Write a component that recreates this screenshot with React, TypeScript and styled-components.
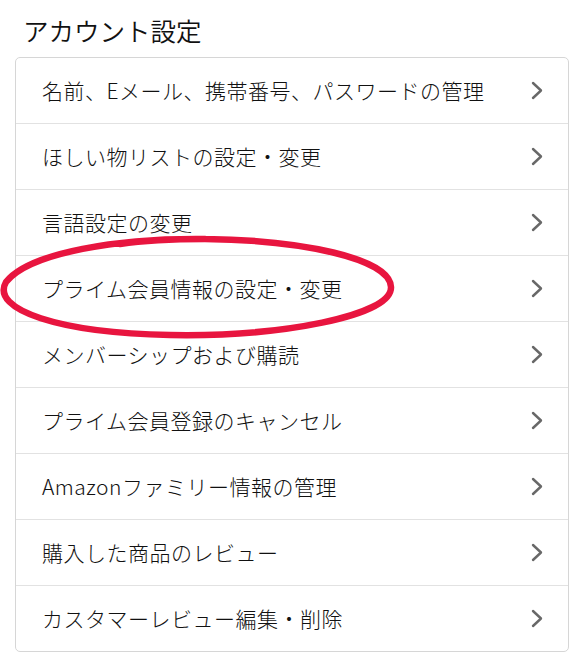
import React from "react";
import styled, { createGlobalStyle } from "styled-components";

const GlobalStyle = createGlobalStyle`
  html, body {
    margin: 0;
    padding: 0;
    background: #ffffff;
  }
  body {
    font-family: "Noto Sans CJK JP", "Noto Sans", sans-serif;
    color: #111111;
  }
`;

const Page = styled.main`
  position: relative;
  width: 582px;
  height: 664px;
  box-sizing: border-box;
  padding: 12px 13px 0 15px;
`;

const Title = styled.h2`
  margin: 0 0 9px 8px;
  height: 36px;
  line-height: 36px;
  font-size: 25.5px;
  font-weight: 350;
  color: #111111;
`;

const Card = styled.ul`
  list-style: none;
  margin: 0;
  padding: 0;
  border: 1px solid #d6d6d6;
  border-radius: 5px;
  background: #ffffff;
`;

const Row = styled.li<{ $first?: boolean }>`
  display: flex;
  align-items: center;
  justify-content: space-between;
  height: 65px;
  padding: 0 25px 0 26px;
  border-top: ${(p) => (p.$first ? "none" : "1px solid #e2e2e2")};
`;

const Label = styled.span`
  font-size: 21px;
  font-weight: 300;
  line-height: 1;
  color: #111111;
  letter-spacing: 0.5px;
`;

const Chevron = () => (
  <svg width="12" height="19" viewBox="0 0 12 19">
    <path
      d="M2 2 L10 9.5 L2 17"
      fill="none"
      stroke="#686868"
      strokeWidth="2.4"
      strokeLinecap="round"
      strokeLinejoin="round"
    />
  </svg>
);

const Marker = styled.svg`
  position: absolute;
  left: 0;
  top: 0;
  pointer-events: none;
`;

const items = [
  "名前、Eメール、携帯番号、パスワードの管理",
  "ほしい物リストの設定・変更",
  "言語設定の変更",
  "プライム会員情報の設定・変更",
  "メンバーシップおよび購読",
  "プライム会員登録のキャンセル",
  "Amazonファミリー情報の管理",
  "購入した商品のレビュー",
  "カスタマーレビュー編集・削除",
];

export default function App() {
  return (
    <>
      <GlobalStyle />
      <Page>
        <Title>アカウント設定</Title>
        <Card>
          {items.map((text, i) => (
            <Row key={text} $first={i === 0}>
              <Label>{text}</Label>
              <Chevron />
            </Row>
          ))}
        </Card>
        <Marker width="582" height="664" viewBox="0 0 582 664">
          <path
            d="M205 239 C 120 238, 30 252, 6 282 C -10 310, 60 333, 170 335 C 280 337, 392 316, 391 287 C 390 258, 300 240, 205 239 C 170 239, 140 241, 120 244"
            fill="none"
            stroke="#e8153f"
            strokeWidth="6.5"
            strokeLinecap="round"
          />
        </Marker>
      </Page>
    </>
  );
}
